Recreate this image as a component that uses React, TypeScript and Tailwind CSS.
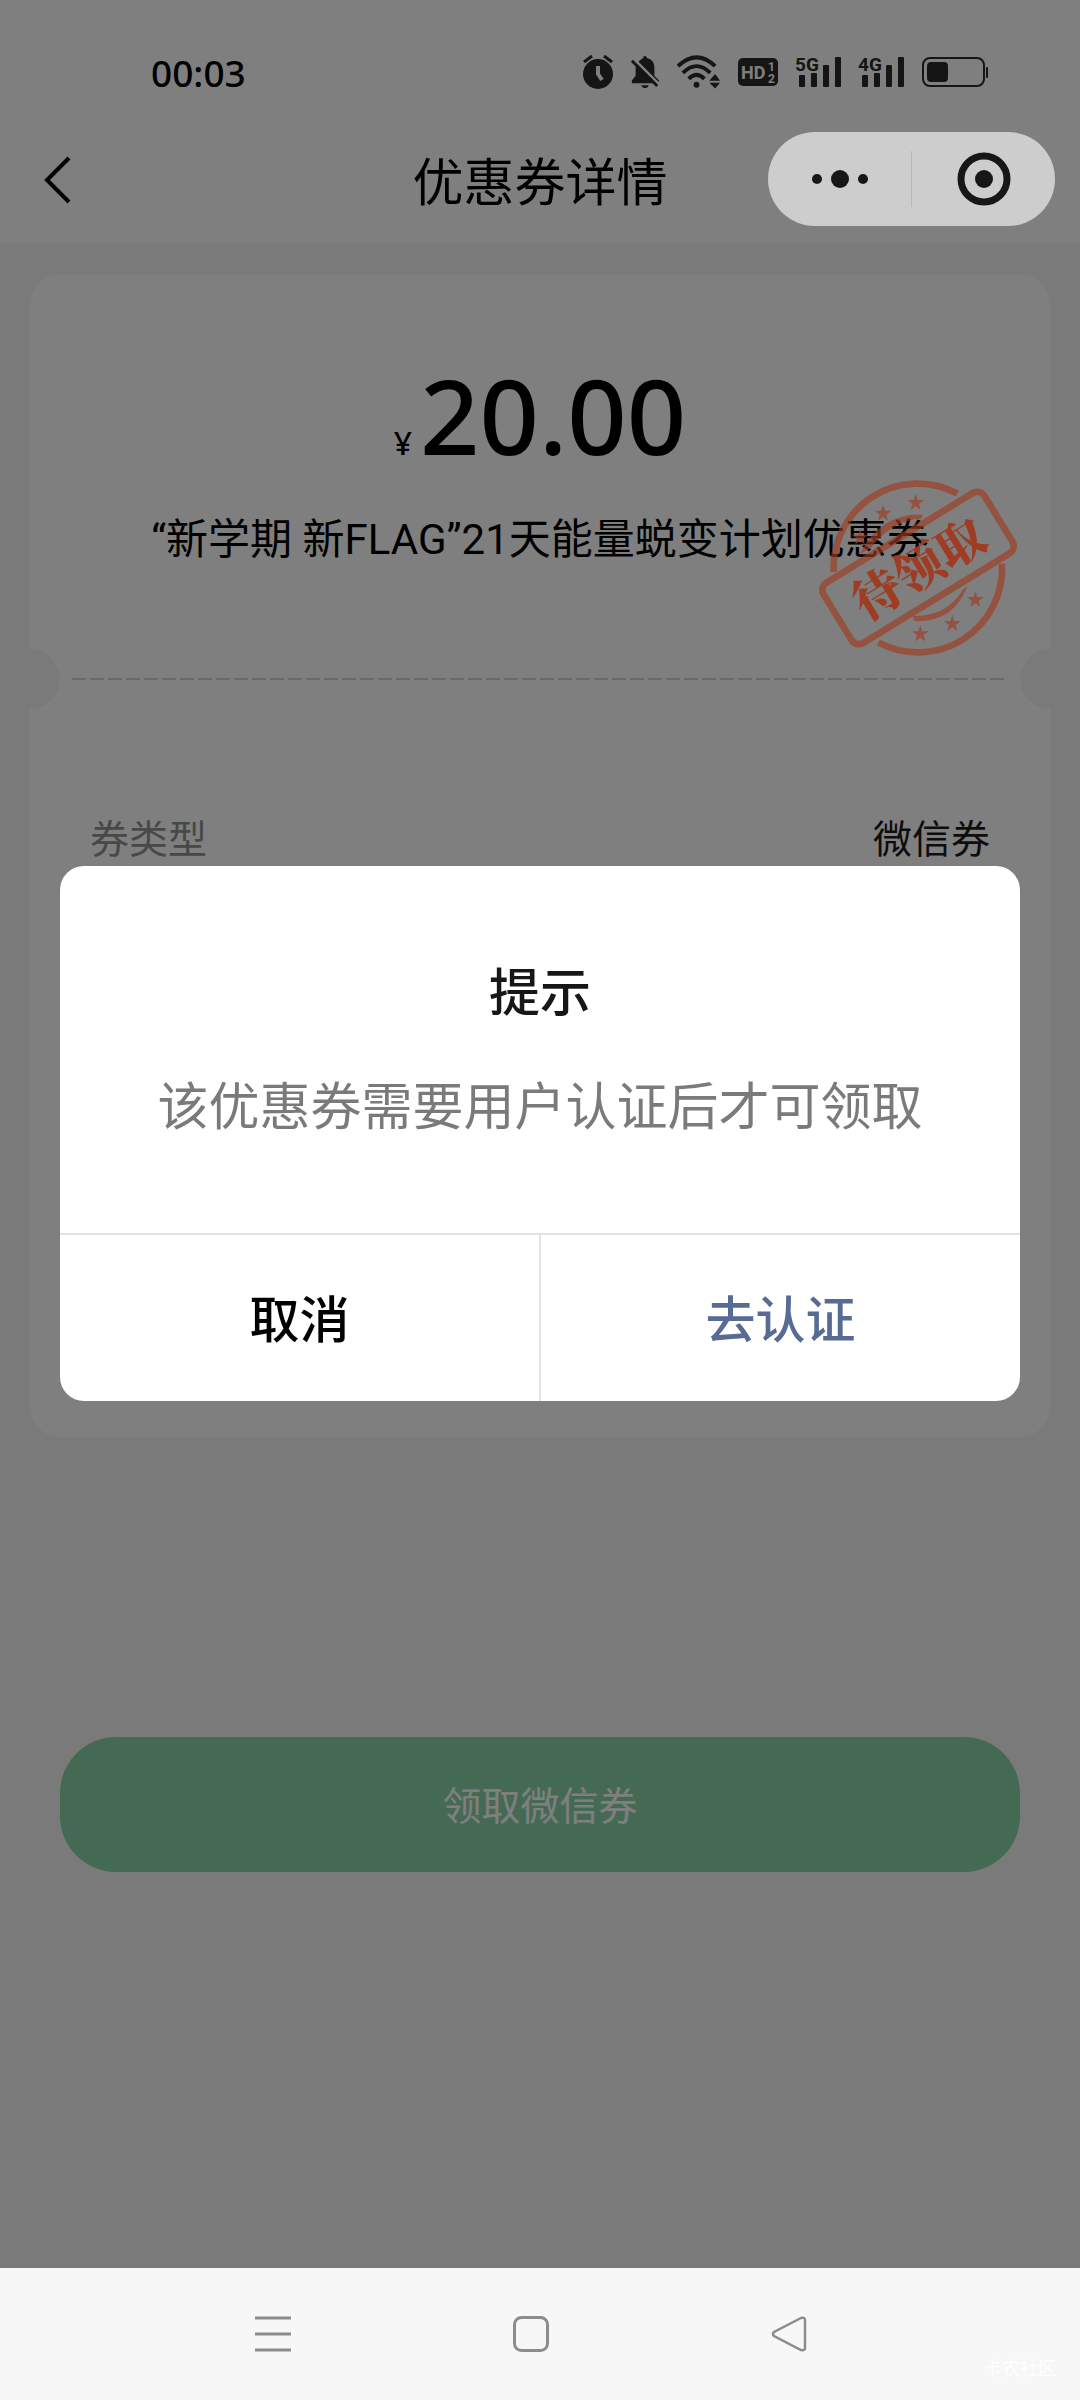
import classNames from "clsx";
import type { ReactNode } from "react";

const star = "M0-26 6-8 25-8 10 4 15 22 0 11-15 22-10 4-25-8-6-8Z";

const starSpots = [
  [407, 158],
  [309, 190],
  [240, 262],
  [586, 449],
  [517, 521],
  [421, 552],
];

const coupon = {
  amount: "20.00",
  name: "“新学期 新FLAG”21天能量蜕变计划优惠券",
  type: "微信券",
};

const Stamp = () => (
  <svg
    viewBox="108 84 612 540"
    className="absolute z-20 right-[30px] top-[204px] w-[204px] h-[180px]"
    role="img"
    aria-label="待领取"
  >
    <g fill="none" stroke="#a03a20" strokeOpacity="0.65" strokeWidth="20">
      <path d="M161 366A252 252 0 0 1 532 131" />
      <path d="M666 341A252 252 0 0 1 295 577" />
      <rect
        x="131"
        y="248"
        width="566"
        height="212"
        rx="26"
        transform="rotate(-31.5 414 354)"
      />
    </g>
    <g fill="#a03a20" fillOpacity="0.65">
      <path d="M240 312Q300 190 428 194L424 206Q340 208 270 296Z" />
      <path d="M562 408Q520 520 402 513L398 498Q500 500 548 420Z" />
      {starSpots.map(([x, y]) => (
        <path key={x} d={star} transform={`translate(${x} ${y})`} />
      ))}
    </g>
    <text
      x="416"
      y="410"
      textAnchor="middle"
      fontSize="146"
      fill="#a03a20"
      fillOpacity="0.95"
      transform="rotate(-31.5 414 354)"
      className="font-black font-['Noto_Serif_CJK_SC','Noto_Sans_CJK_SC',serif]"
    >
      待领取
    </text>
  </svg>
);

const Signal = ({ label }: { label: string }) => (
  <svg viewBox="0 0 46 40" className="w-[46px] h-10 overflow-visible">
    <text x="0" y="19" fontSize="19" className="font-bold font-[Roboto,sans-serif]">
      {label}
    </text>
    <rect x="4" y="23" width="6" height="12" rx="1" />
    <rect x="16" y="21" width="6" height="14" rx="1" />
    <rect x="28" y="13" width="6" height="22" rx="1" />
    <rect x="40" y="5" width="6" height="30" rx="1" />
  </svg>
);

const StatusBar = () => (
  <div className="flex h-[116px] items-center justify-between pl-[151px] pr-[91px] pt-[28px]">
    <time className="text-[37px] leading-none font-medium">00:03</time>
    <div className="flex items-center gap-[17px] text-[#2a2a2a] fill-current">
      <svg viewBox="0 0 30 36" className="w-[30px] h-9">
        <circle cx="15" cy="20" r="15" />
        <path d="M1 8 9 2M29 8 21 2" stroke="currentColor" strokeWidth="3" />
        <path d="M15 12v8l4 6" fill="none" stroke="#fff" strokeWidth="4" />
      </svg>
      <svg viewBox="0 0 32 36" className="w-[30px] h-9">
        <path d="M10 6 14 3Q14 1 16 1T18 3Q26 5 26 13V22L31 27 30 30H2V27L6 22V13Z" />
        <path d="M12 32h8q-1 3-4 3t-4-3Z" />
        <path d="M4 4 33 33" stroke="#fff" strokeWidth="3" />
        <path d="M2 6 29 33" stroke="currentColor" strokeWidth="3" />
      </svg>
      <svg viewBox="0 0 45 36" className="w-11 h-9">
        <g fill="none" stroke="currentColor" strokeWidth="4">
          <path d="M1 12Q20-6 39 12" />
          <path d="M6 19Q20 5 34 19" />
          <path d="M12 25Q20 17 28 25" />
        </g>
        <circle cx="20" cy="31" r="3" />
        <path d="M33 27h11l-5-7ZM33 29h11l-5 6Z" />
      </svg>
      <svg viewBox="0 0 40 28" className="w-10 h-7">
        <rect width="40" height="28" rx="5" />
        <g fill="#fff" className="font-bold font-[Roboto,sans-serif]">
          <text x="3" y="21" fontSize="18">
            HD
          </text>
          <text x="30" y="13" fontSize="12">
            1
          </text>
          <text x="30" y="25" fontSize="12">
            2
          </text>
        </g>
      </svg>
      <Signal label="5G" />
      <Signal label="4G" />
      <svg viewBox="0 0 68 32" className="w-[68px] h-8">
        <rect
          x="2"
          y="2"
          width="61"
          height="28"
          rx="7"
          fill="none"
          stroke="currentColor"
          strokeWidth="2"
        />
        <rect x="6" y="6" width="21" height="20" rx="4" />
        <rect x="65" y="11" width="2" height="11" rx="1" />
      </svg>
    </div>
  </div>
);

const DialogButton = ({
  children,
  primary,
}: {
  children: ReactNode;
  primary?: boolean;
}) => (
  <button
    className={classNames("flex-1 h-[166px] pt-1 text-[50px] font-medium", {
      "text-[#576b95] border-l-2 border-[#e2e2e2]": primary,
      "text-black": !primary,
    })}
  >
    {children}
  </button>
);

const App = () => {
  return (
    <div className="flex min-h-screen flex-col bg-[#f5f5f5] text-black font-['Noto_Sans','Noto_Sans_CJK_SC',sans-serif]">
      <main className="relative flex flex-1 flex-col">
        <header className="bg-white">
          <StatusBar />
          <div className="relative flex h-[127px] items-center justify-center pt-1">
            <button aria-label="返回" className="absolute left-[44px] top-10">
              <svg viewBox="0 0 28 48" className="w-7 h-12">
                <path
                  d="M25 2 3 24 25 46"
                  fill="none"
                  stroke="currentColor"
                  strokeWidth="4"
                />
              </svg>
            </button>
            <h1 className="text-[51px] leading-none">优惠券详情</h1>
            <div className="absolute z-20 right-[25px] top-4 flex h-[94px] w-[287px] items-center rounded-full bg-[#cdcdcd] text-[#171717]">
              <button aria-label="更多" className="flex-1 flex justify-center">
                <svg viewBox="0 0 56 20" className="w-14 h-5 fill-current">
                  <circle cx="5" cy="10" r="5" />
                  <circle cx="28" cy="10" r="9" />
                  <circle cx="51" cy="10" r="5" />
                </svg>
              </button>
              <span className="h-14 w-px bg-[#b8b8b8]" />
              <button aria-label="关闭" className="flex-1 flex justify-center">
                <svg viewBox="0 0 54 54" className="size-[54px] fill-current">
                  <circle
                    cx="27"
                    cy="27"
                    r="23"
                    fill="none"
                    stroke="currentColor"
                    strokeWidth="7"
                  />
                  <circle cx="27" cy="27" r="9" />
                </svg>
              </button>
            </div>
          </div>
        </header>

        <section className="relative mx-[30px] mt-[31px] h-[1163px] rounded-[30px] bg-white">
          <div className="flex h-[375px] flex-col items-center pt-[81px]">
            <p className="flex items-baseline gap-2 leading-none font-medium">
              <span className="text-[32px]">¥</span>
              <span className="text-[104px] leading-[120px]">
                {coupon.amount}
              </span>
            </p>
            <p className="mt-[35px] text-[42px] leading-[60px] whitespace-nowrap font-[Roboto,'Noto_Sans_CJK_SC',sans-serif]">
              {coupon.name}
            </p>
          </div>
          <Stamp />
          <div className="flex h-[60px] items-center justify-between">
            <span className="h-[60px] w-[30px] rounded-r-full bg-[#f5f5f5]" />
            <svg className="mx-3 h-0.5 flex-1">
              <path
                d="M0 1H2000"
                stroke="#d2d2d2"
                strokeWidth="2"
                strokeDasharray="14 4"
              />
            </svg>
            <span className="h-[60px] w-[30px] rounded-l-full bg-[#f5f5f5]" />
          </div>
          <dl className="flex justify-between px-[60px] pt-[99px] text-[39px] leading-[60px]">
            <dt className="text-[#909090]">券类型</dt>
            <dd className="text-[#1a1a1a]">{coupon.type}</dd>
          </dl>
        </section>

        <button className="mx-[60px] mt-[300px] h-[135px] rounded-[56px] bg-[#8ad4a8] pt-0.5 text-[39px] text-white">
          领取微信券
        </button>

        <div className="absolute inset-0 z-10 flex items-center justify-center bg-black/50 px-[60px] pb-0.5">
          <div
            role="dialog"
            aria-labelledby="dialog-title"
            className="w-full overflow-hidden rounded-[24px] bg-white text-center"
          >
            <div className="h-[367px] pt-[89px]">
              <h2
                id="dialog-title"
                className="text-[51px] leading-[72px] font-medium text-[#171717]"
              >
                提示
              </h2>
              <p className="mt-[42px] text-[51px] leading-[72px] text-[#7a7a7a]">
                该优惠券需要用户认证后才可领取
              </p>
            </div>
            <div className="flex border-t-2 border-[#e2e2e2]">
              <DialogButton>取消</DialogButton>
              <DialogButton primary>去认证</DialogButton>
            </div>
          </div>
        </div>
      </main>

      <nav className="relative flex h-[132px] items-center bg-[#f7f7f7] pl-[255px] gap-[222px] text-[#8c8c8c]">
        <button aria-label="最近任务">
          <svg viewBox="0 0 36 36" className="size-9">
            <path
              d="M0 2H36M0 18H36M0 34H36"
              stroke="currentColor"
              strokeWidth="3"
            />
          </svg>
        </button>
        <button aria-label="主屏幕">
          <svg viewBox="0 0 36 36" className="size-9">
            <rect
              x="1.5"
              y="1.5"
              width="33"
              height="33"
              rx="7"
              fill="none"
              stroke="currentColor"
              strokeWidth="3"
            />
          </svg>
        </button>
        <button aria-label="返回桌面">
          <svg viewBox="0 0 36 36" className="size-9">
            <path
              d="M30 2 3 16Q1 18 3 20L30 34Q34 35 34 32V4Q34 1 30 2Z"
              fill="none"
              stroke="currentColor"
              strokeWidth="2.5"
            />
          </svg>
        </button>
        <span className="absolute right-6 bottom-5 text-[18px] leading-6 text-white">
          卡农社区
        </span>
      </nav>
    </div>
  );
};

export default App;
